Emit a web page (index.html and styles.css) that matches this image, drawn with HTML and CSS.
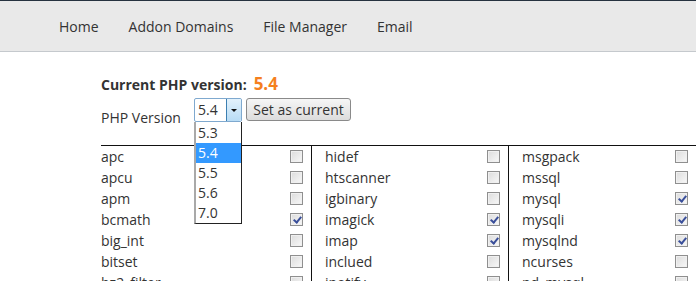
FILE: index.html
```html
<!DOCTYPE html>
<html lang="en">
<head>
    <meta charset="UTF-8">
    <title>PHP Selector</title>
    <link rel="stylesheet" href="styles.css">
</head>
<body>
    <nav class="topnav">
        <a>Home</a>
        <a>Addon Domains</a>
        <a>File Manager</a>
        <a>Email</a>
    </nav>

    <main class="content">
        <div class="current">
            <span class="current-label">Current PHP version:</span>
            <span class="current-value">5.4</span>
        </div>

        <div class="version-row">
            <span class="version-label">PHP Version</span>
            <div class="fake-select">
                <span class="select-value">5.4</span>
                <span class="select-arrow"></span>
                <ul class="select-list">
                    <li>5.3</li>
                    <li class="selected">5.4</li>
                    <li>5.5</li>
                    <li>5.6</li>
                    <li>7.0</li>
                </ul>
            </div>
            <button class="set-btn">Set as current</button>
        </div>

        <div class="ext-table">
            <div class="ext-col">
                <div class="ext-row"><span>apc</span><i class="cb"></i></div>
                <div class="ext-row"><span>apcu</span><i class="cb"></i></div>
                <div class="ext-row"><span>apm</span><i class="cb"></i></div>
                <div class="ext-row"><span>bcmath</span><i class="cb checked"></i></div>
                <div class="ext-row"><span>big_int</span><i class="cb"></i></div>
                <div class="ext-row"><span>bitset</span><i class="cb"></i></div>
                <div class="ext-row"><span>bz2_filter</span><i class="cb"></i></div>
            </div>
            <div class="ext-col">
                <div class="ext-row"><span>hidef</span><i class="cb"></i></div>
                <div class="ext-row"><span>htscanner</span><i class="cb"></i></div>
                <div class="ext-row"><span>igbinary</span><i class="cb"></i></div>
                <div class="ext-row"><span>imagick</span><i class="cb checked"></i></div>
                <div class="ext-row"><span>imap</span><i class="cb checked"></i></div>
                <div class="ext-row"><span>inclued</span><i class="cb"></i></div>
                <div class="ext-row"><span>inotify</span><i class="cb"></i></div>
            </div>
            <div class="ext-col">
                <div class="ext-row"><span>msgpack</span><i class="cb"></i></div>
                <div class="ext-row"><span>mssql</span><i class="cb"></i></div>
                <div class="ext-row"><span>mysql</span><i class="cb checked"></i></div>
                <div class="ext-row"><span>mysqli</span><i class="cb checked"></i></div>
                <div class="ext-row"><span>mysqlnd</span><i class="cb checked"></i></div>
                <div class="ext-row"><span>ncurses</span><i class="cb"></i></div>
                <div class="ext-row"><span>nd_mysql</span><i class="cb"></i></div>
            </div>
        </div>
    </main>
</body>
</html>
```

FILE: styles.css
```css
body {
    margin: 0;
    font-family: "Open Sans", "Noto Sans", sans-serif;
    color: #333;
    background: #fff;
    overflow: hidden;
}

.topnav {
    display: flex;
    gap: 30px;
    height: 50px;
    align-items: center;
    padding-left: 59px;
    background: #e9e9e9;
    border-top: 1px solid #26323f;
    border-bottom: 1px solid #c5c9cd;
}

.topnav a {
    font-size: 14px;
    color: #333;
    cursor: pointer;
}

.content {
    padding: 20px 0 0 101px;
}

.current {
    display: flex;
    align-items: baseline;
    gap: 7px;
    height: 24px;
}

.current-label {
    font-size: 14px;
    font-weight: bold;
}

.current-value {
    font-size: 17px;
    font-weight: bold;
    color: #f5801e;
}

.version-row {
    display: flex;
    align-items: flex-start;
    margin-top: 2px;
    height: 47px;
}

.version-label {
    font-size: 14px;
    width: 93px;
    padding-top: 10px;
}

.fake-select {
    position: relative;
    display: flex;
    width: 46px;
    height: 22px;
    border: 1px solid #7fa9cf;
    border-radius: 2px;
    background: #fff;
}

.select-value {
    flex: 1;
    font-size: 14px;
    line-height: 22px;
    padding-left: 3px;
}

.select-arrow {
    position: relative;
    width: 14px;
    background: linear-gradient(#e3f2fc, #b8dcf5);
    border-left: 1px solid #3c7fb1;
    border-radius: 0 2px 2px 0;
}

.select-arrow::after {
    content: "";
    position: absolute;
    left: 4px;
    top: 10px;
    border-left: 3px solid transparent;
    border-right: 3px solid transparent;
    border-top: 3px solid #111;
}

.select-list {
    position: absolute;
    left: -1px;
    top: 23px;
    width: 45px;
    margin: 0;
    padding: 0;
    list-style: none;
    background: #fff;
    border: 1px solid #222;
    border-left: 2px solid #a9a9a9;
    border-top: none;
    z-index: 2;
}

.select-list li {
    height: 20px;
    line-height: 20px;
    font-size: 14px;
    padding-left: 2px;
}

.select-list li:first-child {
    padding-top: 1px;
}

.select-list li.selected {
    background: #3399ff;
    color: #fff;
}

.set-btn {
    margin-left: 4px;
    height: 23px;
    width: 105px;
    padding: 0;
    font-family: inherit;
    font-size: 14px;
    color: #333;
    border: 1px solid #8a8a8a;
    border-radius: 3px;
    background: linear-gradient(#f6f6f6, #dcdcdc);
}

.ext-table {
    display: grid;
    grid-template-columns: 210px 197px 1fr;
    border-top: 1px solid #111;
}

.ext-col {
    padding: 0 8px 0 13px;
    border-left: 1px solid #111;
}

.ext-col:first-child {
    padding-left: 0;
    border-left: none;
}

.ext-row {
    display: flex;
    justify-content: space-between;
    align-items: center;
    height: 21px;
    font-size: 14px;
}

.cb {
    width: 11px;
    height: 11px;
    border: 1px solid #8f8f8f;
    background: linear-gradient(135deg, #dcdcdc, #f8f8f8);
    box-shadow: inset 0 0 0 1px #f0f0f0;
    position: relative;
}

.cb.checked::after {
    content: "";
    position: absolute;
    left: 4px;
    top: 1px;
    width: 3px;
    height: 6px;
    border-right: 2px solid #3a4f9a;
    border-bottom: 2px solid #3a4f9a;
    transform: rotate(40deg);
}
```
